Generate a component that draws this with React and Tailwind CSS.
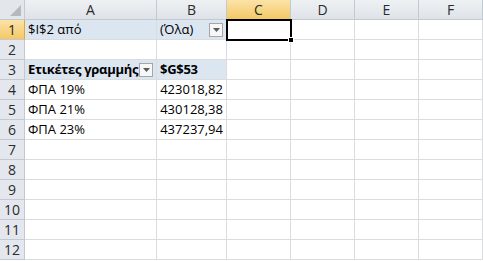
import React from "react";

const cols = ["A", "B", "C", "D", "E", "F"];
const widths = ["w-[132px]", "w-[70px]", "w-[64px]", "w-[64px]", "w-[64px]", "w-[64px]"];

function Drop() {
  return (
    <div className="w-[14px] h-[14px] shrink-0 border border-[#a6a6a6] bg-[#f7f7f7] flex items-center justify-center">
      <svg width="7" height="4" viewBox="0 0 7 4"><path d="M0 0h7L3.5 4z" fill="#5a5a5a" /></svg>
    </div>
  );
}

const data = {
  1: { A: { t: "$I$2 από", bg: true }, B: { t: "(Όλα)", bg: true, drop: true } },
  3: { A: { t: "Ετικέτες γραμμής", bg: true, bold: true, drop: true }, B: { t: "$G$53", bg: true, bold: true } },
  4: { A: { t: "ΦΠΑ 19%" }, B: { t: "423018,82", right: true } },
  5: { A: { t: "ΦΠΑ 21%" }, B: { t: "430128,38", right: true } },
  6: { A: { t: "ΦΠΑ 23%" }, B: { t: "437237,94", right: true } },
};

export default function App() {
  const rows = Array.from({ length: 12 }, (_, i) => i + 1);
  return (
    <div className="w-[483px] h-[261px] overflow-hidden bg-white text-[13px] text-black" style={{ fontFamily: '"Open Sans", "Liberation Sans", sans-serif' }}>
      <div className="flex h-[20px]">
        <div className="w-[25px] shrink-0 bg-[#e3e7ec] border-r border-b border-[#c3c9d1] relative">
          <div className="absolute right-[3px] bottom-[3px] w-0 h-0 border-l-[11px] border-l-transparent border-b-[11px] border-b-[#b5b9be]" />
        </div>
        {cols.map((c, i) => (
          <div
            key={c}
            className={`${widths[i]} shrink-0 flex items-center justify-center border-r border-b text-[14px] ${
              c === "C"
                ? "bg-gradient-to-b from-[#fbe3a7] to-[#f4c865] border-b-[#e4a63a] border-r-[#c3c9d1] text-[#2b2b2b]"
                : "bg-gradient-to-b from-[#eef1f4] to-[#dfe3e8] border-[#c3c9d1] text-[#2b2b2b]"
            }`}
          >
            {c}
          </div>
        ))}
      </div>
      {rows.map((r) => (
        <div key={r} className={`flex h-[20px] relative ${r === 1 ? "z-10" : ""}`}>
          <div
            className={`w-[25px] shrink-0 flex items-center justify-center border-r border-b text-[14px] ${
              r === 1
                ? "bg-gradient-to-b from-[#fbe3a7] to-[#f4c865] border-r-[#e4a63a] border-b-[#c3c9d1] text-[#2b2b2b]"
                : "bg-[#e4e8ee] border-[#c3c9d1] text-[#2b2b2b]"
            }`}
          >
            {r}
          </div>
          {cols.map((c, i) => {
            const cell = data[r] && data[r][c];
            return (
              <div
                key={c}
                className={`${widths[i]} shrink-0 relative flex items-center border-r border-b border-[#dadcdd] pl-[3px] pr-[3px] ${
                  cell && cell.bg ? "bg-[#dce6f1]" : "bg-white"
                } ${cell && cell.right ? "justify-end" : "justify-between"} ${r === 1 && c === "C" ? "z-10" : ""}`}
              >
                {cell && (
                  <span className={`whitespace-nowrap pt-[1px] ${cell.bold ? "font-bold tracking-[-0.3px]" : ""}`}>{cell.t}</span>
                )}
                {cell && cell.drop && <Drop />}
                {r === 1 && c === "C" && (
                  <>
                    <div className="absolute -left-[1px] -top-[1px] w-[66px] h-[22px] border-2 border-black" />
                    <div className="absolute -right-[4px] -bottom-[4px] w-[6px] h-[6px] bg-black border border-white" />
                  </>
                )}
              </div>
            );
          })}
        </div>
      ))}
    </div>
  );
}
